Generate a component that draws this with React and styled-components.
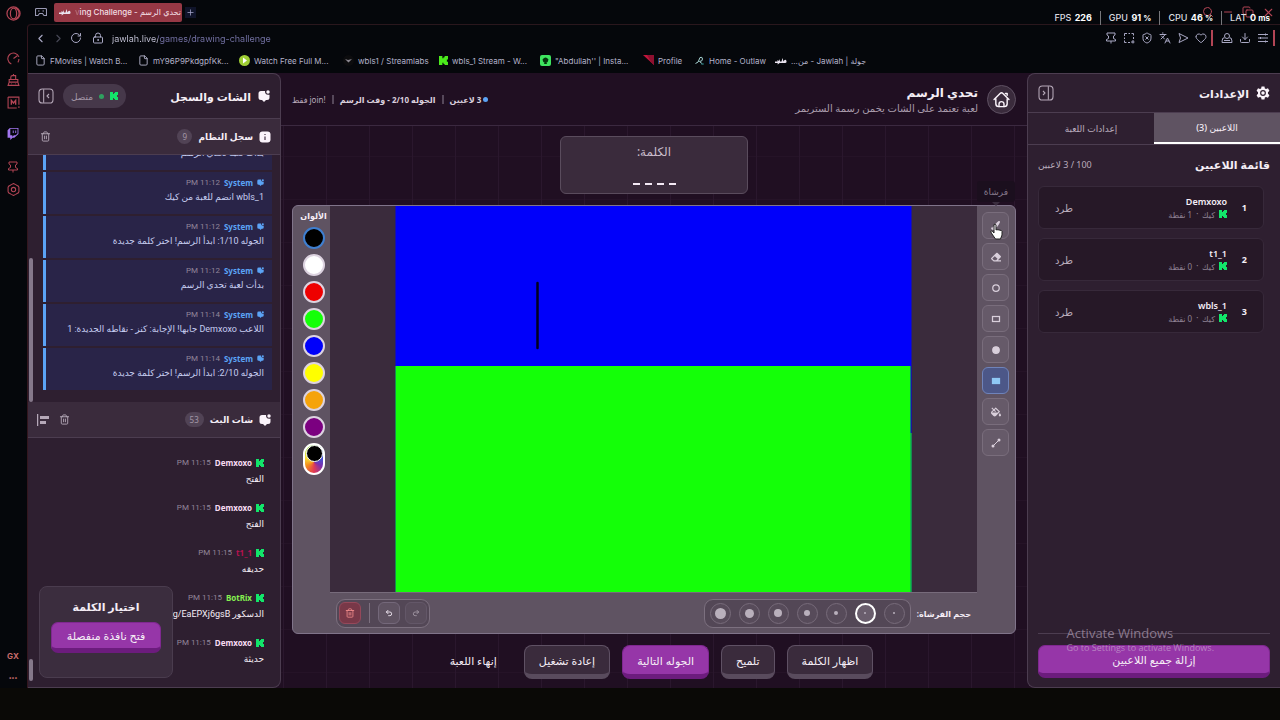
import React from "react";
import styled, { createGlobalStyle, css } from "styled-components";
import {
  ChevronLeft,
  ChevronRight,
  RotateCw,
  LockKeyhole,
  Plus,
  ShieldX,
  Languages,
  Heart,
  Download,
  Search,
  Minus,
  Copy,
  X,
  File,
  Trash2,
  Undo2,
  Redo2,
} from "lucide-react";
import { FaEraser, FaPaintBrush, FaFillDrip, FaTwitch } from "react-icons/fa";

const colors = {
  chrome: "#05070b",
  red: "#b34555",
  link: "#a9a8c4",
  panel: "#2e1f30",
  panelLight: "#3a2b3c",
  line: "#4c3d50",
  stage: "#200f22",
  frame: "#5f5362",
  purple: "#9636a8",
  purpleDark: "#6c1c7d",
  blue: "#5ba3f5",
  text: "#f5eef6",
  muted: "#a497a7",
  kick: "#12e66a",
};

const GlobalStyle = createGlobalStyle`
  * {
    box-sizing: border-box;
  }

  body {
    margin: 0;
    background: ${colors.chrome};
    font-family: "Noto Sans", "DejaVu Sans", sans-serif;
    font-size: 10px;
    color: ${colors.text};
  }

  button, input {
    font-family: inherit;
    color: inherit;
    border: 0;
    padding: 0;
    background: none;
  }

  a {
    color: inherit;
    text-decoration: none;
  }

  h1, h2, h3, p, ul {
    margin: 0;
    padding: 0;
  }

  ul {
    list-style: none;
  }

  svg {
    flex-shrink: 0;
    display: block;
  }
`;

/* ---------- icons ---------- */

const KickIcon = ({ size = 8, color = colors.kick }) => (
  <svg width={size} height={size} viewBox="0 0 8 8" fill={color}>
    <path d="M0 0h3v2h1V1h1V0h3v3H7v1H6v0h1v1h1v3H5V7H4V6H3v2H0z" />
  </svg>
);

const ChatIcon = ({ size = 12, color = "#fbf4fb" }) => (
  <svg width={size} height={size} viewBox="0 0 24 24" fill={color}>
    <circle cx="20" cy="4" r="3.5" />
    <path d="M14 2H6Q1 2 1 7v8q0 5 5 5h2l3 3q1 1 2 0l3-3h2q5 0 5-5V9.500q-6 1-8-2.500-1-2-1-5z" />
  </svg>
);

const InfoIcon = () => (
  <svg width="12" height="12" viewBox="0 0 24 24">
    <rect x="1" y="1" width="22" height="22" rx="6" fill="#fbf4fb" />
    <path d="M12 11v7M12 6v2" stroke="#4a3a4c" strokeWidth="2.500" />
  </svg>
);

const GearIcon = () => (
  <svg width="14" height="14" viewBox="0 0 24 24">
    <path
      fill="#fbf4fb"
      d="M9.500 1h5l.7 3.200 2 1.100L20.500 4l2.500 4.300-2.500 2.500v2.400l2.500 2.500-2.500 4.300-3.300-1.200-2 1.100-.7 3.100h-5l-.7-3.100-2-1.100L3.500 20 1 15.700l2.500-2.500v-2.400L1 8.300 3.500 4l3.300 1.300 2-1.100z"
    />
    <circle cx="12" cy="12" r="4" fill="#fbf4fb" stroke="#2e1f30" strokeWidth="2" />
  </svg>
);

const HomeIcon = () => (
  <svg width="17" height="17" viewBox="0 0 24 24" fill="none" stroke="#fbf4fb" strokeWidth="2" strokeLinecap="round">
    <path d="M1.500 12L10 3.500q2-2 4 0l8.500 8.500M4 10.500V18q0 4 4 4h8q4 0 4-4v-7.500M17.500 3.500H20V6" strokeLinejoin="round" />
    <path d="M8.500 22v-3.500a3.500 3.500 0 0 1 7 0V22" />
  </svg>
);

const PanelIcon = ({ flip }) => (
  <svg
    width="16"
    height="16"
    viewBox="0 0 24 24"
    fill="none"
    stroke="#b5a8b8"
    strokeWidth="1.600"
    transform={flip ? "scale(-1 1)" : undefined}
  >
    <rect x="1.500" y="1.500" width="21" height="21" rx="5" />
    <path d="M8.500 2v20M16.500 9l-3 3 3 3" />
  </svg>
);

const AlignIcon = () => (
  <svg width="12" height="12" viewBox="0 0 24 24" fill="#b5a8b8">
    <path d="M0 0h2.500v24H0zM6 4h18v6H6zM6 14h12v6H6z" />
  </svg>
);

const OperaIcon = () => (
  <svg width="15" height="15" viewBox="0 0 24 24" fill="none" stroke={colors.red} strokeWidth="2">
    <circle cx="12" cy="12" r="10.500" />
    <ellipse cx="12" cy="12" rx="5" ry="8.500" />
    <path d="M15 3q6 3 6 9t-6 9" />
  </svg>
);

const PadIcon = () => (
  <svg width="12" height="12" viewBox="0 0 24 24" fill="none" stroke="#9a9ab4" strokeWidth="2.200">
    <path d="M3 5h18q2 0 2 2v12h-5l-3-4H9l-3 4H1V7q0-2 2-2z" />
    <path d="M6 10h3M15 10h3" />
  </svg>
);

const SpeedIcon = () => (
  <svg width="13" height="13" viewBox="0 0 24 24" fill="none" stroke={colors.red} strokeWidth="2">
    <path d="M8 22A10.500 10.500 0 1 1 22 9M12 12l7-5M22 13q0 4-2 6" />
  </svg>
);

const BotIcon = () => (
  <svg width="13" height="13" viewBox="0 0 24 24" fill="none" stroke={colors.red} strokeWidth="2">
    <path d="M7 10V6q0-3 3-3h6v7M4 10h16v5H4zM4 15l-2 6h20l-2-6M8 18h1M15 18h1M12 3V0" />
  </svg>
);

const ModsIcon = () => (
  <svg width="13" height="13" viewBox="0 0 24 24" fill="none" stroke={colors.red} strokeWidth="2">
    <path d="M2 2h20v14M18 22H2V2M22 19v3" />
    <path d="M8 16V8l4 5 4-5v8" strokeWidth="2.500" />
  </svg>
);

const PinIcon = ({ color = colors.red }) => (
  <svg width="12" height="12" viewBox="0 0 24 24" fill="none" stroke={color} strokeWidth="2">
    <path d="M4 2h16v4l-3 2v5l4 2v3H3v-3l4-2V8L4 6zM12 18v5" />
  </svg>
);

const SnapIcon = () => (
  <svg width="12" height="12" viewBox="0 0 24 24" fill="none" stroke="currentColor" strokeWidth="2">
    <path d="M3 8V3h5M11 3h3M17 3h4v4M21 10v4M3 11v3M3 17v4h4M10 21h4M20 16v7M16 20h7" />
  </svg>
);

const FlowIcon = () => (
  <svg width="12" height="12" viewBox="0 0 24 24" fill="none" stroke="currentColor" strokeWidth="2">
    <path d="M4 3l18 9-18 9 3-9z" strokeLinejoin="round" />
  </svg>
);

const AccountIcon = () => (
  <svg width="12" height="12" viewBox="0 0 24 24" fill="none" stroke="currentColor" strokeWidth="2">
    <circle cx="12" cy="8" r="5" />
    <path d="M7 12H4q-2 4-2 9h20q0-5-2-9h-3M6 17h12" />
  </svg>
);

const SettingsLinesIcon = () => (
  <svg width="12" height="12" viewBox="0 0 24 24" fill="none" stroke="currentColor" strokeWidth="2">
    <path d="M2 5h20M2 12h20M2 19h20M17 3v4M7 10v4M17 17v4" />
  </svg>
);

const HexIcon = () => (
  <svg width="13" height="13" viewBox="0 0 24 24" fill="none" stroke={colors.red} strokeWidth="2">
    <path d="M12 1l4 2 5 3 1 2v8l-1 2-5 3-4 2-4-2-5-3-1-2V8l1-2 5-3z" />
    <circle cx="12" cy="12" r="4" />
  </svg>
);

const PlayIcon = () => (
  <svg width="11" height="11" viewBox="0 0 22 22">
    <circle cx="11" cy="11" r="11" fill="#9fce35" />
    <path d="M8 5l8 6-8 6z" fill="#fff" />
  </svg>
);

const StreamlabsIcon = () => (
  <svg width="11" height="11" viewBox="0 0 22 22">
    <circle cx="11" cy="11" r="11" fill="#0c0c0e" />
    <path d="M4 8l6 2 8-2-7 7z" fill="#8b8790" />
  </svg>
);

const AlienIcon = () => (
  <svg width="11" height="11" viewBox="0 0 22 22">
    <rect width="22" height="22" rx="4" fill="#3ee45f" />
    <path d="M5 9q6-8 12 0-1 6-4 6l1 3H8l1-3q-3 0-4-6z" fill="#06350f" />
  </svg>
);

const ProfileIcon = () => (
  <svg width="11" height="11" viewBox="0 0 22 22">
    <path d="M0 0h22v20z" fill="#c2163c" />
    <path d="M8 0h14v20l-5-5z" fill="#8e1030" />
  </svg>
);

const OutlawIcon = () => (
  <svg width="11" height="11" viewBox="0 0 22 22" fill="none" stroke="#a8d5d5" strokeWidth="2">
    <path d="M3 17q6 0 9-12 5-2 5 3t-6 5l6 5" />
    <path d="M14 18h6" stroke="#237878" />
  </svg>
);

const JawlahIcon = () => (
  <svg width="12" height="8" viewBox="0 0 24 16" fill="#e8e2ee">
    <path d="M0 9h5V6l3 2 2-4v5h3l2-7 2 7q2-5 5-3 3 6-2 6H9q-1 3-5 2l3-2H0z" />
  </svg>
);

const LineIcon = () => (
  <svg width="10" height="10" viewBox="0 0 20 20" fill="#d9cfdb">
    <path d="M4 16L16 4" stroke="#d9cfdb" strokeWidth="2" />
    <circle cx="4" cy="16" r="3" />
    <circle cx="16" cy="4" r="3" />
  </svg>
);

const Shape = ({ kind, filled, color = "#d9cfdb" }) => (
  <svg width="10" height="10" viewBox="0 0 20 20" fill={filled ? color : "none"} stroke={color} strokeWidth="2.500">
    {kind === "circle" ? <circle cx="10" cy="10" r="6.500" /> : <rect x="3" y="5" width="14" height="10" />}
  </svg>
);

const HandCursor = () => (
  <svg width="14" height="17" viewBox="0 0 14 17">
    <path
      fill="#fff"
      stroke="#222"
      d="M4 1.500q1.500-1 2 .5v5l1-.5 1 .5 1-.3 1 .7 1-.2 1 1V12l-1.500 4h-5L2 11 .7 8.700Q1 7.500 2.300 8.300L4 10z"
    />
  </svg>
);

/* ---------- data ---------- */

const bookmarks = [
  { icon: <File size={11} strokeWidth={2} />, label: "FMovies | Watch B...", width: 91 },
  { icon: <File size={11} strokeWidth={2} />, label: "mY96P9PkdgpfKk...", width: 89 },
  { icon: <PlayIcon />, label: "Watch Free Full M...", width: 92 },
  { icon: <StreamlabsIcon />, label: "wbls1 / Streamlabs", width: 84 },
  { icon: <KickIcon size={9} color="#4bea1c" />, label: "wbls_1 Stream - W...", width: 89 },
  { icon: <AlienIcon />, label: "\"Abdullah'' | Insta...", width: 91 },
  { icon: <ProfileIcon />, label: "Profile", width: 39 },
  { icon: <OutlawIcon />, label: "Home - Outlaw", width: 69 },
  { icon: <JawlahIcon />, label: "جولة | Jawlah - من...", rtl: true, width: 92 },
];

const players = [
  { name: "Demxoxo", points: 1 },
  { name: "t1_1", points: 0 },
  { name: "wbls_1", points: 0 },
];

const logs = [
  { time: "11:11 PM", text: "بدأت لعبة تحدي الرسم" },
  { time: "11:12 PM", text: "wbls_1 انضم للعبة من كيك" },
  { time: "11:12 PM", text: "الجوله 1/10: ابدأ الرسم! اختر كلمة جديدة" },
  { time: "11:12 PM", text: "بدأت لعبة تحدي الرسم" },
  { time: "11:14 PM", text: "اللاعب Demxoxo جابها! الإجابة: كنز - نقاطه الجديدة: 1" },
  { time: "11:14 PM", text: "الجوله 2/10: ابدأ الرسم! اختر كلمة جديدة" },
];

const messages = [
  { name: "Demxoxo", text: "الفتح" },
  { name: "Demxoxo", text: "الفتح" },
  { name: "t1_1", color: "#b8124f", text: "حديقه" },
  { name: "BotRix", color: "#86f050", text: "الدسكور gg/EaEPXj6gsB" },
  { name: "Demxoxo", text: "حديثة" },
];

const swatches = ["#000000", "#ffffff", "#ee0000", "#14ff08", "#0000fa", "#ffff00", "#f5a30a", "#7b0080"];

const tools = [
  { name: "فرشاة", icon: <FaPaintBrush size={9} /> },
  { name: "ممحاة", icon: <FaEraser size={10} /> },
  { name: "دائرة", icon: <Shape kind="circle" /> },
  { name: "مستطيل", icon: <Shape kind="rect" /> },
  { name: "دائرة ممتلئة", icon: <Shape kind="circle" filled /> },
  { name: "مستطيل ممتلئ", icon: <Shape kind="rect" filled color="#8fc8f5" />, active: true },
  { name: "تعبئة", icon: <FaFillDrip size={10} /> },
  { name: "خط", icon: <LineIcon /> },
];

const brushSizes = [2, 2, 4, 6, 8, 9, 11];

/* ---------- page ---------- */

export default function App() {
  return (
    <Page>
      <GlobalStyle />
      <Shell>
        <SideRail />
        <BrowserWindow>
          <TabStrip />
          <Frame>
            <AddressBar />
            <Bookmarks>
              {bookmarks.map((b) => (
                <Bookmark href="#" key={b.label} $width={b.width}>
                  {b.icon}
                  <span dir={b.rtl ? "rtl" : "ltr"}>{b.label}</span>
                </Bookmark>
              ))}
            </Bookmarks>
            <Game dir="rtl">
              <SettingsPanel />
              <Stage />
              <ChatPanel />
            </Game>
          </Frame>
        </BrowserWindow>
      </Shell>
      <Taskbar />
      <Stats />
      <Watermark>
        <strong>Activate Windows</strong>
        <span>Go to Settings to activate Windows.</span>
      </Watermark>
    </Page>
  );
}

const SideRail = () => (
  <Rail>
    <RailButton aria-label="Opera" $gap={31}>
      <OperaIcon />
    </RailButton>
    <RailButton aria-label="Speed dial" $gap={8}>
      <SpeedIcon />
    </RailButton>
    <RailButton aria-label="Aria" $gap={8}>
      <BotIcon />
    </RailButton>
    <RailButton aria-label="Mods" $gap={18}>
      <ModsIcon />
    </RailButton>
    <RailButton aria-label="Twitch" $gap={19}>
      <FaTwitch size={12} color="#a277f0" />
    </RailButton>
    <RailButton aria-label="Pins" $gap={8}>
      <PinIcon />
    </RailButton>
    <RailButton aria-label="Setup">
      <HexIcon />
    </RailButton>
    <RailFoot>
      <span>GX</span>
      <span>•••</span>
    </RailFoot>
  </Rail>
);

const TabStrip = () => (
  <Tabs>
    <PadIcon />
    <BrowserTab>
      <JawlahIcon />
      <span>
        <i>v</i>ing Challenge - تحدي الرسم
      </span>
    </BrowserTab>
    <NewTab aria-label="New tab">
      <Plus size={9} />
    </NewTab>
    <WindowButtons>
      <button aria-label="Search">
        <Search size={12} />
      </button>
      <button aria-label="Minimize">
        <Minus size={12} />
      </button>
      <button aria-label="Restore">
        <Copy size={12} />
      </button>
      <button aria-label="Close">
        <X size={13} />
      </button>
    </WindowButtons>
  </Tabs>
);

const AddressBar = () => (
  <Address>
    <button aria-label="Back">
      <ChevronLeft size={13} />
    </button>
    <button aria-label="Forward" disabled>
      <ChevronRight size={13} />
    </button>
    <button aria-label="Reload">
      <RotateCw size={12} />
    </button>
    <UrlField>
      <LockKeyhole size={12} />
      <UrlInput aria-label="Address" defaultValue="jawlah.live/games/drawing-challenge" />
    </UrlField>
    <PinIcon color="#a9a8c4" />
    <SnapIcon />
    <ShieldX size={12} />
    <Languages size={12} />
    <FlowIcon />
    <Heart size={12} />
    <RedBar />
    <AccountIcon />
    <Download size={12} />
    <SettingsLinesIcon />
    <RedBar />
  </Address>
);

const Stats = () => (
  <StatList>
    <li>
      FPS <b>226</b>
    </li>
    <li>
      GPU <b>91 <small>%</small></b>
    </li>
    <li>
      CPU <b>46 <small>%</small></b>
    </li>
    <li>
      LAT <b>0 <small>ms</small></b>
    </li>
  </StatList>
);

const SettingsPanel = () => (
  <Panel $side="right">
    <PanelHead $height={39}>
      <PanelTitle>
        <GearIcon />
        الإعدادات
      </PanelTitle>
      <IconButton aria-label="طي الإعدادات">
        <PanelIcon flip />
      </IconButton>
    </PanelHead>
    <TabRow role="tablist">
      <GameTab role="tab" aria-selected="true" $active>
        اللاعبين (3)
      </GameTab>
      <GameTab role="tab" aria-selected="false">
        إعدادات اللعبة
      </GameTab>
    </TabRow>
    <PlayersHead>
      <h3>قائمة اللاعبين</h3>
      <span>100 / 3 لاعبين</span>
    </PlayersHead>
    <PlayerList>
      {players.map((p, i) => (
        <PlayerCard key={p.name}>
          <b className="rank">{i + 1}</b>
          <div className="who">
            <strong>{p.name}</strong>
            <p>
              <KickIcon /> كيك <em>•</em> {p.points} نقطة
            </p>
          </div>
          <button>طرد</button>
        </PlayerCard>
      ))}
    </PlayerList>
    <PanelFoot>
      <PurpleButton>إزالة جميع اللاعبين</PurpleButton>
    </PanelFoot>
  </Panel>
);

const Stage = () => (
  <StageColumn>
    <StageHead>
      <HomeLink href="#" aria-label="الرئيسية">
        <HomeIcon />
      </HomeLink>
      <StageTitle>
        <h1>تحدي الرسم</h1>
        <p>لعبة تعتمد على الشات يخمن رسمة الستريمر</p>
      </StageTitle>
      <StageInfo>
        <Dot $color={colors.blue} />
        <b>3 لاعبين</b>
        <i />
        <b>الجوله 2/10 - وقت الرسم</b>
        <i />
        <span>!join فقط</span>
      </StageInfo>
    </StageHead>
    <StageBody>
      <WordCard>
        <h2>الكلمة:</h2>
        <Blanks>
          <i />
          <i />
          <i />
          <i />
        </Blanks>
      </WordCard>
      <Board>
        <ToolColumn>
          {tools.map((t) => (
            <ToolButton key={t.name} aria-label={t.name} $active={t.active}>
              {t.icon}
            </ToolButton>
          ))}
          <Tooltip>فرشاة</Tooltip>
          <Pointer>
            <HandCursor />
          </Pointer>
        </ToolColumn>
        <CanvasColumn>
          <CanvasArea>
            <svg width="100%" height="100%" viewBox="0 0 516 386" preserveAspectRatio="xMidYMid meet">
              <rect width="516" height="386" fill="#0000fa" />
              <rect y="160" width="515" height="226" fill="#14ff08" />
              <rect x="515" y="227" width="1" height="159" fill="#14ff08" />
              <path d="M142 77v65" stroke="#00001c" strokeWidth="2.500" strokeLinecap="round" />
            </svg>
          </CanvasArea>
          <BottomBar>
            <span>حجم الفرشاة:</span>
            <Capsule $gap={8}>
              {brushSizes.map((size, i) => (
                <SizeButton key={i} aria-label={`حجم ${i + 1}`} $dot={size} $active={i === 1} />
              ))}
            </Capsule>
            <Capsule $gap={5} $end>
              <ActionButton aria-label="إعادة" $faded>
                <Redo2 size={8} strokeWidth={3} />
              </ActionButton>
              <ActionButton aria-label="تراجع">
                <Undo2 size={8} strokeWidth={3} />
              </ActionButton>
              <Divider />
              <ActionButton aria-label="مسح" $danger>
                <Trash2 size={10} />
              </ActionButton>
            </Capsule>
          </BottomBar>
        </CanvasColumn>
        <ColorColumn>
          <h3>الألوان</h3>
          {swatches.map((c, i) => (
            <Swatch key={c} aria-label={c} $color={c} $active={i === 0} />
          ))}
          <CustomSwatch aria-label="لون مخصص" />
        </ColorColumn>
      </Board>
      <Controls>
        <GameButton>اظهار الكلمة</GameButton>
        <GameButton>تلميح</GameButton>
        <GameButton $kind="primary">الجوله التالية</GameButton>
        <GameButton>إعادة تشغيل</GameButton>
        <GameButton $kind="plain">إنهاء اللعبة</GameButton>
      </Controls>
    </StageBody>
  </StageColumn>
);

const ChatPanel = () => (
  <Panel $side="left">
    <PanelHead $height={45}>
      <PanelTitle>
        <ChatIcon />
        الشات والسجل
      </PanelTitle>
      <HeadGroup>
        <Status>
          <KickIcon />
          <Dot $color="#2fa05f" />
          متصل
        </Status>
        <IconButton aria-label="طي الشات">
          <PanelIcon />
        </IconButton>
      </HeadGroup>
    </PanelHead>
    <SectionHead>
      <InfoIcon />
      <h3>سجل النظام</h3>
      <Badge>9</Badge>
      <IconButton aria-label="مسح السجل" $end>
        <Trash2 size={11} />
      </IconButton>
    </SectionHead>
    <LogList>
      {logs.map((l, i) => (
        <LogItem key={i}>
          <MetaLine $color={colors.blue}>
            <ChatIcon size={7} color={colors.blue} />
            <b>System</b>
            <time>{l.time}</time>
          </MetaLine>
          <p>{l.text}</p>
        </LogItem>
      ))}
      <ScrollThumb $size={144} $bottom={0} />
    </LogList>
    <SectionHead>
      <ChatIcon />
      <h3>شات البث</h3>
      <Badge>53</Badge>
      <IconButton aria-label="مسح الشات" $end>
        <Trash2 size={11} />
      </IconButton>
      <IconButton aria-label="محاذاة" $flush>
        <AlignIcon />
      </IconButton>
    </SectionHead>
    <MessageList>
      {messages.map((m, i) => (
        <Message key={i}>
          <MetaLine $color={m.color}>
            <KickIcon />
            <b>{m.name}</b>
            <time>11:15 PM</time>
          </MetaLine>
          <p>{m.text}</p>
        </Message>
      ))}
      <ScrollThumb $size={22} $bottom={6} />
      <WordPopup>
        <h3>اختيار الكلمة</h3>
        <PurpleButton>فتح نافذة منفصلة</PurpleButton>
      </WordPopup>
    </MessageList>
  </Panel>
);

/* ---------- browser ---------- */

const Page = styled.div`
  position: relative;
  display: flex;
  flex-direction: column;
  height: 100vh;
  min-height: 600px;
  overflow: hidden;
`;

const Shell = styled.div`
  display: flex;
  flex: 1;
  min-height: 0;
`;

const Rail = styled.nav`
  display: flex;
  flex-direction: column;
  align-items: center;
  width: 28px;
  padding: 6px 2px 0 0;
`;

const RailButton = styled.button`
  display: grid;
  place-items: center;
  height: 14px;
  margin-bottom: ${(p) => p.$gap || 0}px;
`;

const RailFoot = styled.div`
  display: flex;
  flex-direction: column;
  align-items: center;
  gap: 10px;
  margin-top: auto;
  padding-bottom: 4px;
  font: bold 8px/12px Inter, sans-serif;
  color: #c96b6b;

  span:last-child {
    font-size: 6px;
  }
`;

const BrowserWindow = styled.div`
  display: flex;
  flex-direction: column;
  flex: 1;
  min-width: 0;
`;

const Tabs = styled.div`
  display: flex;
  align-items: center;
  height: 24px;
  padding: 0 6px 0 7px;
`;

const BrowserTab = styled.button`
  display: flex;
  align-items: center;
  gap: 4px;
  width: 128px;
  height: 19px;
  margin-left: 7px;
  padding: 0 5px;
  white-space: nowrap;
  background: #963845;
  border-radius: 2px;
  font: 500 8px Inter, "DejaVu Sans", sans-serif;
  color: #f3dfe4;

  i {
    font-style: normal;
    opacity: 0.3;
  }
`;

const NewTab = styled.button`
  display: grid;
  place-items: center;
  width: 11px;
  height: 11px;
  margin-left: 3px;
  background: #10142a;
  color: #a6a5cc;
`;

const WindowButtons = styled.div`
  display: flex;
  gap: 8px;
  margin-left: auto;
  color: ${colors.red};

  button {
    display: grid;
    place-items: center;
    width: 12px;
  }
`;

const Frame = styled.div`
  display: flex;
  flex-direction: column;
  flex: 1;
  min-height: 0;
  border-top: 1px solid #2a171d;
  border-radius: 4px 0 0 0;
  box-shadow: -1px 0 0 #33161e;
`;

const Address = styled.div`
  display: flex;
  align-items: center;
  gap: 6px;
  height: 27px;
  padding: 0 5px 1px 6px;
  color: ${colors.link};

  button {
    display: grid;
    place-items: center;
    width: 12px;
  }

  button:disabled {
    opacity: 0.4;
  }
`;

const UrlField = styled.div`
  display: flex;
  align-items: center;
  gap: 8px;
  flex: 1;
  min-width: 0;
  padding-left: 4px;
`;

const UrlInput = styled.input`
  flex: 1;
  min-width: 0;
  font: 9px Inter, sans-serif;
  background: linear-gradient(90deg, #c9c8dc 46px, #7674a8 46px);
  -webkit-background-clip: text;
  background-clip: text;
  color: transparent;
`;

const RedBar = styled.i`
  width: 2px;
  height: 16px;
  margin: 0 2px 0 -2px;
  background: ${colors.red};

  &:last-child {
    margin-right: 0;
  }
`;

const Bookmarks = styled.nav`
  display: flex;
  align-items: center;
  gap: 12px;
  height: 21px;
  padding: 0 7px 4px;
  font: 8px Inter, "DejaVu Sans", sans-serif;
  color: #b4b3ca;
`;

const Bookmark = styled.a`
  display: flex;
  align-items: center;
  gap: 4px;
  width: ${(p) => p.$width}px;
  white-space: nowrap;
`;

const Taskbar = styled.footer`
  height: 32px;
  background: #0a0906;
`;

const StatList = styled.ul`
  position: absolute;
  top: 11px;
  right: 10px;
  display: flex;
  font: 500 9px/14px Inter, sans-serif;
  color: #dcdce0;

  li + li {
    margin-left: 8px;
    padding-left: 8px;
    border-left: 1px solid #77777b;
  }

  b {
    margin-left: 1px;
    color: #fff;
  }

  small {
    font-size: 8px;
  }
`;

const Watermark = styled.div`
  position: absolute;
  right: 66px;
  bottom: 65px;
  display: flex;
  flex-direction: column;
  font-family: "Open Sans", sans-serif;
  color: rgba(215, 195, 220, 0.55);
  pointer-events: none;

  strong {
    font-size: 13px;
    line-height: 16px;
    font-weight: 400;
  }

  span {
    font-size: 9px;
    line-height: 14px;
  }
`;

/* ---------- panels ---------- */

const Game = styled.main`
  display: flex;
  flex: 1;
  min-height: 0;
  background: ${colors.stage};
`;

const Panel = styled.aside`
  display: flex;
  flex-direction: column;
  width: 253px;
  min-height: 0;
  overflow: hidden;
  background: ${colors.panel};
  border: 1px solid ${colors.line};
  ${(p) =>
    p.$side === "right"
      ? css`
          border-right: 0;
          border-radius: 8px 0 0 8px;
        `
      : css`
          border-left: 0;
          border-radius: 0 8px 8px 0;
        `}
`;

const PanelHead = styled.header`
  display: flex;
  align-items: center;
  justify-content: space-between;
  flex-shrink: 0;
  height: ${(p) => p.$height}px;
  padding: 0 10px;
  border-bottom: 1px solid ${colors.line};
`;

const PanelTitle = styled.h2`
  display: flex;
  align-items: center;
  gap: 7px;
  font-size: 11px;
`;

const HeadGroup = styled.div`
  display: flex;
  align-items: center;
  gap: 9px;
`;

const Status = styled.span`
  display: flex;
  align-items: center;
  gap: 6px;
  height: 24px;
  padding: 0 8px;
  border-radius: 12px;
  background: #46384a;
  font-size: 9px;
  color: ${colors.muted};
`;

const Dot = styled.i`
  width: 5px;
  height: 5px;
  border-radius: 50%;
  background: ${(p) => p.$color};
`;

const IconButton = styled.button`
  display: grid;
  place-items: center;
  color: #b5a8b8;
  ${(p) => p.$end && "margin-right: auto;"}
  ${(p) => p.$flush && "justify-items: end;"}
`;

const TabRow = styled.div`
  display: flex;
  flex-shrink: 0;
  height: 32px;
  border-bottom: 1px solid ${colors.line};
`;

const GameTab = styled.button`
  flex: 1;
  font-size: 9px;
  font-weight: 500;
  color: ${(p) => (p.$active ? colors.text : "#b9acbc")};
  ${(p) =>
    p.$active &&
    css`
      background: #5f5362;
      border-bottom: 2px solid #fff;
    `}
`;

const PlayersHead = styled.div`
  display: flex;
  align-items: center;
  justify-content: space-between;
  height: 41px;
  padding: 0 10px 2px;
  font-size: 9px;
  color: #b9acbc;

  h3 {
    font-size: 11px;
    color: ${colors.text};
  }
`;

const PlayerList = styled.ul`
  display: flex;
  flex-direction: column;
  gap: 9px;
  flex: 1;
  padding: 0 16px 0 10px;
`;

const PlayerCard = styled.li`
  display: flex;
  align-items: center;
  height: 43px;
  padding: 0 16px;
  background: #261827;
  border: 1px solid #37293a;
  border-radius: 6px;

  .rank {
    width: 20px;
    font-size: 9px;
  }

  .who {
    flex: 1;
  }

  strong {
    display: block;
    font-size: 9px;
    line-height: 13px;
    font-weight: 600;
  }

  p {
    display: flex;
    align-items: center;
    gap: 4px;
    font-size: 8px;
    line-height: 13px;
    color: #8f8293;
  }

  em {
    font-size: 5px;
  }

  button {
    color: #b9acbc;
    font-size: 10px;
  }
`;

const PanelFoot = styled.div`
  margin: 0 10px;
  padding: 11px 0 9px;
  border-top: 1px solid ${colors.line};
`;

const PurpleButton = styled.button`
  width: 100%;
  height: 33px;
  border: 1px solid #7f2890;
  border-bottom: 5px solid ${colors.purpleDark};
  border-radius: 7px;
  background: ${colors.purple};
  font-size: 11px;
  font-weight: 500;
`;

const SectionHead = styled.div`
  display: flex;
  align-items: center;
  flex-shrink: 0;
  gap: 6px;
  height: 36px;
  padding: 0 9px;
  background: ${colors.panelLight};
  border-bottom: 1px solid ${colors.line};

  h3 {
    font-size: 9px;
  }

  button:last-child {
    min-width: 16px;
  }
`;

const Badge = styled.span`
  min-width: 15px;
  padding: 0 5px;
  border-radius: 8px;
  background: #514355;
  font-size: 8px;
  line-height: 15px;
  text-align: center;
  color: ${colors.muted};
`;

const LogList = styled.ul`
  position: relative;
  display: flex;
  flex-direction: column;
  justify-content: flex-end;
  flex: 0 1 247px;
  gap: 2px;
  padding: 0 8px 12px 15px;
  overflow: hidden;
`;

const LogItem = styled.li`
  flex-shrink: 0;
  height: 42px;
  padding: 4px 8px 0;
  border-left: 3px solid ${colors.blue};
  background: #292448;
  color: #c6cdf0;

  p {
    font-family: Roboto, "DejaVu Sans", sans-serif;
    font-size: 9px;
    line-height: 16px;
    white-space: nowrap;
  }
`;

const MetaLine = styled.div`
  display: flex;
  align-items: center;
  gap: 4px;
  font-size: 8px;
  line-height: 13px;
  color: ${(p) => p.$color || "#f7dcf3"};

  time {
    font-family: Roboto, sans-serif;
    color: #93869a;
  }
`;

const ScrollThumb = styled.i`
  position: absolute;
  left: 1px;
  bottom: ${(p) => p.$bottom}px;
  width: 4px;
  height: ${(p) => p.$size}px;
  border-radius: 2px;
  background: #85788a;
`;

const MessageList = styled.ul`
  position: relative;
  display: flex;
  flex-direction: column;
  justify-content: flex-end;
  gap: 12px;
  flex: 1;
  min-height: 0;
  padding: 0 16px 18px;
  overflow: hidden;
`;

const Message = styled.li`
  flex-shrink: 0;

  p {
    font-family: Roboto, "DejaVu Sans", sans-serif;
    font-size: 9px;
    line-height: 20px;
  }
`;

const WordPopup = styled.div`
  position: absolute;
  left: 11px;
  bottom: 9px;
  width: 134px;
  height: 92px;
  padding: 11px 11px;
  text-align: center;
  background: #3b2d3e;
  border: 1px solid #4a3c4e;
  border-radius: 8px;

  h3 {
    margin-bottom: 6px;
    font-size: 11px;
    line-height: 18px;
  }

  ${PurpleButton} {
    height: 31px;
  }
`;

/* ---------- stage ---------- */

const StageColumn = styled.section`
  display: flex;
  flex-direction: column;
  flex: 1;
  min-width: 0;
`;

const StageHead = styled.header`
  display: flex;
  align-items: center;
  gap: 9px;
  flex-shrink: 0;
  height: 53px;
  padding: 0 11px;
  border-bottom: 1px solid #3b2940;
`;

const HomeLink = styled.a`
  display: grid;
  place-items: center;
  width: 29px;
  height: 29px;
  border: 1px solid #5e5062;
  border-radius: 50%;
  background: #3a2b3c;
`;

const StageTitle = styled.div`
  h1 {
    font-size: 12px;
    line-height: 17px;
  }

  p {
    font-size: 10px;
    line-height: 14px;
    color: #a89bab;
  }
`;

const StageInfo = styled.div`
  display: flex;
  align-items: center;
  gap: 2px;
  margin-right: auto;
  font-size: 8px;
  color: #b9acbc;

  b {
    color: #d9cedb;
  }

  b + i {
    width: 2px;
    height: 9px;
    margin: 0 4px;
    background: #56485a;
  }
`;

const StageBody = styled.div`
  display: flex;
  flex-direction: column;
  align-items: center;
  gap: 11px;
  flex: 1;
  min-height: 0;
  padding: 10px 11px 9px;
  background-image: linear-gradient(90deg, #2a172d 1px, transparent 1px),
    linear-gradient(#251327 1px, transparent 1px);
  background-size: 43px 43px;
  background-position: 2px 30px;
`;

const WordCard = styled.div`
  display: flex;
  flex-direction: column;
  align-items: center;
  justify-content: space-between;
  flex-shrink: 0;
  width: 188px;
  height: 58px;
  padding: 6px 0 8px;
  background: ${colors.panelLight};
  border: 1px solid #5a4c5d;
  border-radius: 6px;

  h2 {
    font-size: 12px;
    line-height: 18px;
    font-weight: 400;
    color: #c9bdcb;
  }
`;

const Blanks = styled.div`
  display: flex;
  gap: 5px;

  i {
    width: 7px;
    height: 2px;
    background: #f3e8f4;
  }
`;

const Board = styled.div`
  display: flex;
  align-self: stretch;
  flex: 1;
  min-height: 0;
  border: 1px solid #80748a;
  border-radius: 6px;
  background: ${colors.frame};
`;

const ToolColumn = styled.div`
  position: relative;
  display: flex;
  flex-direction: column;
  align-items: center;
  gap: 4px;
  width: 38px;
  padding: 6px 1px 0 0;
`;

const ToolButton = styled.button`
  display: grid;
  place-items: center;
  width: 27px;
  height: 27px;
  border: 1px solid ${(p) => (p.$active ? "#6f83ba" : "#796d7c")};
  border-radius: 6px;
  background: ${(p) => (p.$active ? "#4c5788" : "#665a69")};
  color: #d9cfdb;
`;

const Tooltip = styled.span`
  position: absolute;
  bottom: 100%;
  left: 0;
  width: 38px;
  margin-bottom: 4px;
  font-size: 9px;
  line-height: 21px;
  text-align: center;
  border-radius: 3px;
  background: #1b0f1e;
  color: #85788a;

  &::after {
    content: "";
    position: absolute;
    top: 100%;
    left: 15px;
    border: 4px solid transparent;
    border-top-color: #3a2d3e;
  }
`;

const Pointer = styled.span`
  position: absolute;
  top: 17px;
  left: 13px;
`;

const CanvasColumn = styled.div`
  display: flex;
  flex-direction: column;
  flex: 1;
  min-width: 0;
`;

const CanvasArea = styled.div`
  flex: 1;
  min-height: 0;
  background: ${colors.panelLight};
`;

const BottomBar = styled.div`
  display: flex;
  align-items: center;
  gap: 6px;
  flex-shrink: 0;
  height: 41px;
  padding: 0 6px;
  border-top: 1px solid #776b7b;
  font-size: 8px;
  font-weight: 600;
`;

const Capsule = styled.div`
  display: flex;
  align-items: center;
  gap: ${(p) => p.$gap}px;
  height: 29px;
  padding: 0 ${(p) => (p.$end ? 2 : 5)}px;
  border: 1px solid #7c707f;
  border-radius: 9px;
  background: #534756;
  ${(p) => p.$end && "margin-right: auto;"}
`;

const SizeButton = styled.button`
  display: grid;
  place-items: center;
  width: 21px;
  height: 21px;
  border: ${(p) => (p.$active ? "2px solid #fff" : "1px solid #776b7a")};
  border-radius: 50%;
  background: ${(p) => (p.$active ? "#6a5e6d" : "#574b5a")};

  &::before {
    content: "";
    width: ${(p) => p.$dot}px;
    height: ${(p) => p.$dot}px;
    border-radius: 50%;
    background: #b9b0bc;
  }
`;

const ActionButton = styled.button`
  display: grid;
  place-items: center;
  width: 22px;
  height: 22px;
  border: 1px solid ${(p) => (p.$danger ? "#95485a" : "#74687a")};
  border-radius: 6px;
  background: ${(p) => (p.$danger ? "#783848" : "#5f5362")};
  color: ${(p) => (p.$danger ? "#f08c8c" : "#e6dde8")};
  opacity: ${(p) => (p.$faded ? 0.5 : 1)};
`;

const Divider = styled.i`
  width: 1px;
  height: 20px;
  margin: 0 3px;
  background: #7c707f;
`;

const ColorColumn = styled.div`
  display: flex;
  flex-direction: column;
  align-items: center;
  gap: 5px;
  width: 37px;
  padding: 4px 0 0 4px;

  h3 {
    font-size: 8px;
    line-height: 12px;
  }
`;

const Swatch = styled.button`
  flex-shrink: 0;
  width: 22px;
  height: 22px;
  border: 2px solid ${(p) => (p.$active ? "#3f7fd0" : "#ddd3e0")};
  border-radius: 50%;
  background: ${(p) => p.$color};
`;

const CustomSwatch = styled.button`
  display: flex;
  flex-shrink: 0;
  width: 22px;
  height: 32px;
  border: 2px solid #fff;
  border-radius: 11px;
  background: conic-gradient(from 0deg at 50% 60%, #7be04a, #4157d8, #7c2fae, #e23a55, #f28a1c, #f5e03c, #7be04a);

  &::before {
    content: "";
    width: 15px;
    height: 15px;
    border: 1px solid #fff;
    border-radius: 50%;
    background: #000;
  }
`;

const Controls = styled.div`
  display: flex;
  flex-shrink: 0;
  gap: 12px;
`;

const GameButton = styled.button`
  height: 34px;
  padding: 0 14px;
  border: 1px solid #5f5164;
  border-bottom: 5px solid #594b5d;
  border-radius: 8px;
  background: #3a2b3c;
  font-size: 11px;
  font-weight: 500;
  white-space: nowrap;
  ${(p) =>
    p.$kind === "primary" &&
    css`
      background: ${colors.purple};
      border-color: #7f2890;
      border-bottom-color: ${colors.purpleDark};
    `}
  ${(p) =>
    p.$kind === "plain" &&
    css`
      background: none;
      border-color: transparent;
    `}
`;
